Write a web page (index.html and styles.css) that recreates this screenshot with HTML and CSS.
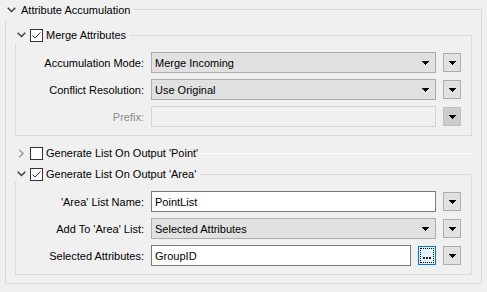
FILE: index.html
```html
<!DOCTYPE html>
<html>
<head>
<meta charset="utf-8">
<link rel="stylesheet" href="styles.css">
</head>
<body>
<div class="panel">
  <div class="hdr">
    <span class="chev"><svg width="9" height="6" viewBox="0 0 9 6"><polyline points="0.7,0.7 4.5,4.5 8.3,0.7" fill="none" stroke="#3a3a3a" stroke-width="1.4"/></svg></span>
    <span class="title">Attribute Accumulation</span>
    <span class="hline"></span>
  </div>
  <div class="panel-body">
    <div class="group">
      <div class="ghdr">
        <span class="chev"><svg width="9" height="6" viewBox="0 0 9 6"><polyline points="0.7,0.7 4.5,4.5 8.3,0.7" fill="none" stroke="#3a3a3a" stroke-width="1.4"/></svg></span>
        <span class="cb"><svg width="11" height="11" viewBox="0 0 11 11"><polyline points="1.5,5.5 4,8 9.5,2.5" fill="none" stroke="#333" stroke-width="1"/></svg></span>
        <span class="gtitle">Merge Attributes</span>
        <span class="gline"></span>
      </div>
      <div class="gbody">
        <div class="row">
          <span class="lbl">Accumulation Mode:</span>
          <div class="combo"><span class="val">Merge Incoming</span><svg class="arr" width="7" height="4" viewBox="0 0 7 4"><path d="M0 0h7v1H0zM1 1h5v1H1zM2 2h3v1H2zM3 3h1v1H3z" fill="#000"/></svg></div>
          <span class="tbtn"><svg width="7" height="4" viewBox="0 0 7 4"><path d="M0 0h7v1H0zM1 1h5v1H1zM2 2h3v1H2zM3 3h1v1H3z" fill="#000"/></svg></span>
        </div>
        <div class="row">
          <span class="lbl">Conflict Resolution:</span>
          <div class="combo"><span class="val">Use Original</span><svg class="arr" width="7" height="4" viewBox="0 0 7 4"><path d="M0 0h7v1H0zM1 1h5v1H1zM2 2h3v1H2zM3 3h1v1H3z" fill="#000"/></svg></div>
          <span class="tbtn"><svg width="7" height="4" viewBox="0 0 7 4"><path d="M0 0h7v1H0zM1 1h5v1H1zM2 2h3v1H2zM3 3h1v1H3z" fill="#000"/></svg></span>
        </div>
        <div class="row">
          <span class="lbl disabled">Prefix:</span>
          <div class="edit dis"></div>
          <span class="tbtn dis"><svg width="7" height="4" viewBox="0 0 7 4"><path d="M0 0h7v1H0zM1 1h5v1H1zM2 2h3v1H2zM3 3h1v1H3z" fill="#000"/></svg></span>
        </div>
      </div>
    </div>

    <div class="ghdr solo">
      <span class="chev"><svg width="9" height="9" viewBox="0 0 9 9"><polyline points="2.2,0.8 6,4.5 2.2,8.2" fill="none" stroke="#9a9a9a" stroke-width="1.4"/></svg></span>
      <span class="cb"></span>
      <span class="gtitle">Generate List On Output 'Point'</span>
      <span class="gline white"></span>
    </div>

    <div class="group area">
      <div class="ghdr">
        <span class="chev"><svg width="9" height="6" viewBox="0 0 9 6"><polyline points="0.7,0.7 4.5,4.5 8.3,0.7" fill="none" stroke="#3a3a3a" stroke-width="1.4"/></svg></span>
        <span class="cb"><svg width="11" height="11" viewBox="0 0 11 11"><polyline points="1.5,5.5 4,8 9.5,2.5" fill="none" stroke="#333" stroke-width="1"/></svg></span>
        <span class="gtitle">Generate List On Output 'Area'</span>
        <span class="gline"></span>
      </div>
      <div class="gbody">
        <div class="row">
          <span class="lbl">'Area' List Name:</span>
          <div class="edit"><span class="val">PointList</span></div>
          <span class="tbtn"><svg width="7" height="4" viewBox="0 0 7 4"><path d="M0 0h7v1H0zM1 1h5v1H1zM2 2h3v1H2zM3 3h1v1H3z" fill="#000"/></svg></span>
        </div>
        <div class="row">
          <span class="lbl">Add To 'Area' List:</span>
          <div class="combo"><span class="val">Selected Attributes</span><svg class="arr" width="7" height="4" viewBox="0 0 7 4"><path d="M0 0h7v1H0zM1 1h5v1H1zM2 2h3v1H2zM3 3h1v1H3z" fill="#000"/></svg></div>
          <span class="tbtn"><svg width="7" height="4" viewBox="0 0 7 4"><path d="M0 0h7v1H0zM1 1h5v1H1zM2 2h3v1H2zM3 3h1v1H3z" fill="#000"/></svg></span>
        </div>
        <div class="row">
          <span class="lbl">Selected Attributes:</span>
          <div class="split">
            <div class="edit"><span class="val">GroupID</span></div>
            <span class="dots"><span class="focus"><i class="dot"></i><i class="dot"></i><i class="dot"></i></span></span>
          </div>
          <span class="tbtn"><svg width="7" height="4" viewBox="0 0 7 4"><path d="M0 0h7v1H0zM1 1h5v1H1zM2 2h3v1H2zM3 3h1v1H3z" fill="#000"/></svg></span>
        </div>
      </div>
    </div>
  </div>
</div>
</body>
</html>
```
FILE: styles.css
```css
html, body {
  margin: 0;
  padding: 0;
  background: #f0f0f0;
}
body {
  width: 487px;
  height: 292px;
  overflow: hidden;
  font-family: "Liberation Sans", Arial, sans-serif;
  font-size: 11px;
  color: #000;
}
.panel {
  margin-left: 5px;
  width: 477px;
}
.hdr {
  display: flex;
  height: 20px;
}
.hdr .chev {
  display: flex;
  margin-left: 2px;
  margin-top: 7px;
  width: 9px;
  height: 6px;
}
.hdr .title {
  margin-left: 5px;
  line-height: 20px;
  white-space: nowrap;
}
.hline {
  flex: 1;
  margin-left: 4px;
  margin-top: 9px;
  border-top: 1px solid #dcdcdc;
  border-right: 1px solid #dcdcdc;
}
.panel-body {
  border: 1px solid #dcdcdc;
  border-top: 0;
  padding: 7px 9px 8px 9px;
}
.ghdr {
  display: flex;
  align-items: center;
  height: 16px;
}
.ghdr .chev {
  display: flex;
  align-items: center;
  justify-content: center;
  width: 9px;
  height: 9px;
  margin-left: 2px;
}
.cb {
  box-sizing: border-box;
  width: 13px;
  height: 13px;
  margin-left: 4px;
  border: 1px solid #333;
  background: #fff;
  display: flex;
}
.gtitle {
  margin-left: 3px;
  white-space: nowrap;
  line-height: 16px;
}
.gline {
  flex: 1;
  align-self: stretch;
  margin-left: 4px;
  margin-top: 8px;
  border-top: 1px solid #dcdcdc;
  border-right: 1px solid #dcdcdc;
}
.gline.white {
  border-top-color: #fcfcfc;
  border-right: 0;
  height: 0;
}
.solo {
  margin-top: 9px;
}
.group.area {
  margin-top: 5px;
}
.gbody {
  border: 1px solid #dcdcdc;
  border-top: 0;
  padding: 9px 10px 8px 0;
  display: flex;
  flex-direction: column;
  gap: 6px;
}
.row {
  display: grid;
  grid-template-columns: 128px 285px 18px;
  column-gap: 7px;
  height: 21px;
  align-items: center;
}
.lbl {
  text-align: right;
  white-space: nowrap;
}
.lbl.disabled {
  color: #8a8a8a;
}
.combo {
  box-sizing: border-box;
  height: 21px;
  border: 1px solid #adadad;
  background: #e1e1e1;
  display: flex;
  align-items: center;
  padding: 0 6px 0 3px;
}
.val {
  flex: 1;
  white-space: nowrap;
}
.edit {
  box-sizing: border-box;
  height: 21px;
  border: 1px solid #7a7a7a;
  background: #fff;
  display: flex;
  align-items: center;
  padding: 0 3px;
}
.edit.dis {
  border-color: #d4d4d4;
  background: #f0f0f0;
}
.tbtn {
  box-sizing: border-box;
  width: 18px;
  height: 19px;
  border: 1px solid #adadad;
  background: #e1e1e1;
  display: flex;
  align-items: center;
  justify-content: center;
}
.tbtn.dis {
  background: #cccccc;
  border-color: #bfbfbf;
}
.split {
  display: flex;
  gap: 7px;
  align-items: center;
}
.split .edit {
  flex: 1;
}
.dots {
  box-sizing: border-box;
  width: 18px;
  height: 19px;
  border: 1px solid #0078d7;
  background: #e5f1fb;
  padding: 1px;
  display: flex;
}
.focus {
  flex: 1;
  border: 1px dotted #000;
  display: flex;
  align-items: flex-end;
  justify-content: center;
  gap: 1px;
  padding-bottom: 3px;
}
.dot {
  display: block;
  width: 2px;
  height: 2px;
  background: #222;
}
```
